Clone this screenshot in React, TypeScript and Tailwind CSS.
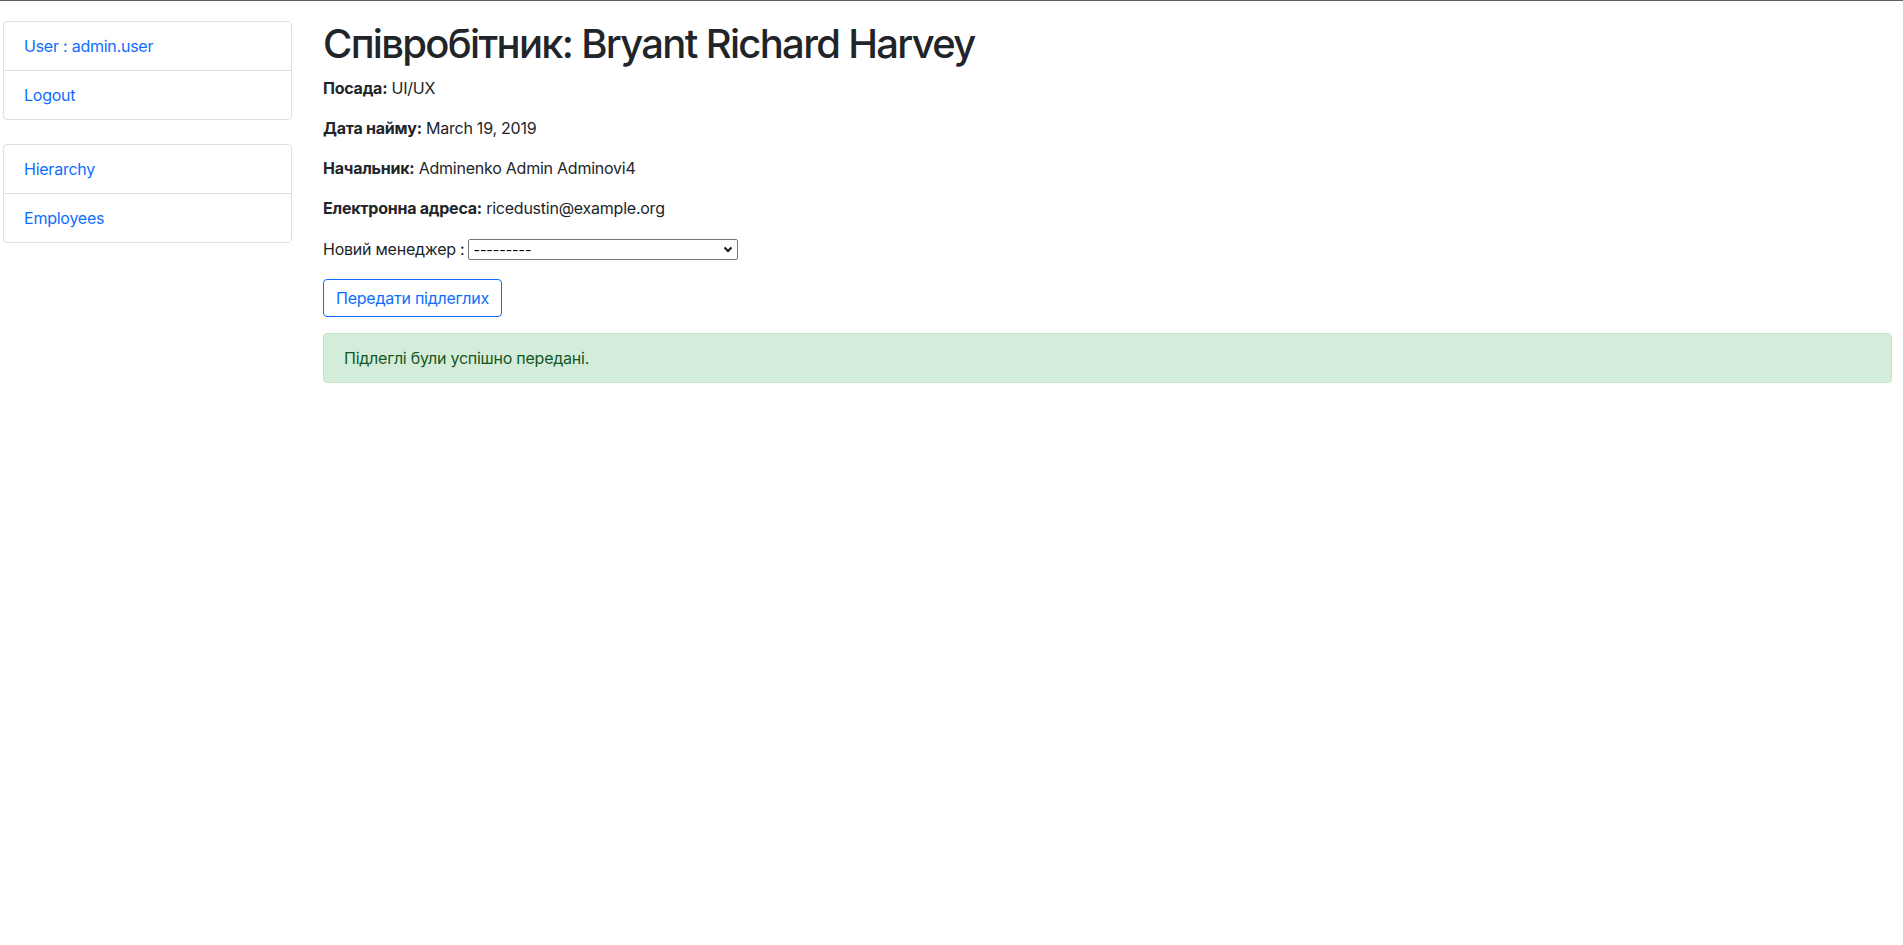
import React from "react";

export default function App() {
  return (
    <div
      className="min-h-[945px] w-full bg-white text-[#212529] text-[16px] leading-[24px] tracking-[-0.015em]"
      style={{ fontFamily: "Inter, 'Noto Sans', sans-serif" }}
    >
      <div className="h-px bg-[#5f5f5f]" />
      <div className="flex">
        <aside className="ml-[3px] w-[289px] shrink-0 pt-[20px]">
          <div className="rounded-[4px] border border-[#dfdfdf]">
            <div className="border-b border-[#dfdfdf] px-[20px] py-[12px]">
              <a className="text-[#0d6efd]">User : admin.user</a>
            </div>
            <div className="px-[20px] py-[12px]">
              <a className="text-[#0d6efd]">Logout</a>
            </div>
          </div>
          <div className="mt-[24px] rounded-[4px] border border-[#dfdfdf]">
            <div className="border-b border-[#dfdfdf] px-[20px] py-[12px]">
              <a className="text-[#0d6efd]">Hierarchy</a>
            </div>
            <div className="px-[20px] py-[12px]">
              <a className="text-[#0d6efd]">Employees</a>
            </div>
          </div>
        </aside>
        <main className="ml-[31px] mr-[11px] flex-1 pt-[19px]">
          <h1 className="mb-[8px] text-[40px] font-medium leading-[48px] tracking-[-0.042em] text-[#212529]">
            Співробітник: Bryant Richard Harvey
          </h1>
          <p className="mb-[16px]">
            <b className="font-bold">Посада:</b> UI/UX
          </p>
          <p className="mb-[16px]">
            <b className="font-bold">Дата найму:</b> March 19, 2019
          </p>
          <p className="mb-[16px]">
            <b className="font-bold">Начальник:</b> Adminenko Admin Adminovi4
          </p>
          <p className="mb-[16px]">
            <b className="font-bold">Електронна адреса:</b> ricedustin@example.org
          </p>
          <div className="mb-[17px] flex h-[26px] items-center">
            <span>Новий менеджер :</span>
            <div className="relative ml-[4px] h-[21px] w-[270px] rounded-[2px] border border-[#767676] bg-white">
              <span className="absolute left-[4px] top-0 text-[14px] leading-[19px] tracking-normal text-black">
                ---------
              </span>
              <svg
                className="absolute right-[4px] top-[5px]"
                width="10"
                height="9"
                viewBox="0 0 10 9"
              >
                <path d="M1.5 2.5 L5 6 L8.5 2.5" fill="none" stroke="#111" strokeWidth="2" />
              </svg>
            </div>
          </div>
          <button className="mb-[16px] h-[38px] rounded-[4px] border border-[#0d6efd] px-[12px] text-[16px] leading-[24px] text-[#0d6efd]">
            Передати підлеглих
          </button>
          <div className="rounded-[4px] border border-[#c3e6cb] bg-[#d4edda] px-[20px] py-[12px] text-[#155724]">
            Підлеглі були успішно передані.
          </div>
        </main>
      </div>
    </div>
  );
}
